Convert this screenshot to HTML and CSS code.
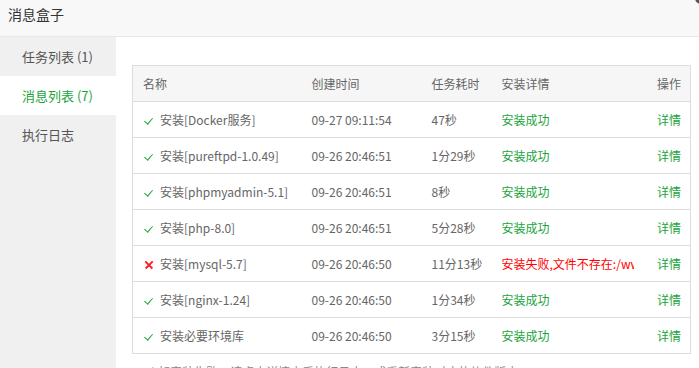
FILE: index.html
```html
<!DOCTYPE html>
<html lang="zh-CN">
<head>
    <meta charset="UTF-8">
    <title>消息盒子</title>
    <link rel="stylesheet" href="styles.css">
</head>
<body>
    <div class="layer">
        <div class="layer-title">消息盒子</div>
        <span class="layer-close"></span>
        <div class="layer-body">
            <ul class="tabs">
                <li>任务列表 (1)</li>
                <li class="active">消息列表 (7)</li>
                <li>执行日志</li>
            </ul>
            <div class="content">
                <table class="task-table">
                    <colgroup>
                        <col class="c-name">
                        <col class="c-time">
                        <col class="c-cost">
                        <col class="c-info">
                        <col class="c-op">
                    </colgroup>
                    <thead>
                        <tr>
                            <th>名称</th>
                            <th>创建时间</th>
                            <th>任务耗时</th>
                            <th>安装详情</th>
                            <th class="op">操作</th>
                        </tr>
                    </thead>
                    <tbody>
                        <tr>
                            <td><span class="ok"></span>安装[Docker服务]</td>
                            <td>09-27 09:11:54</td>
                            <td>47秒</td>
                            <td><div class="clip green">安装成功</div></td>
                            <td class="op"><a>详情</a></td>
                        </tr>
                        <tr>
                            <td><span class="ok"></span>安装[pureftpd-1.0.49]</td>
                            <td>09-26 20:46:51</td>
                            <td>1分29秒</td>
                            <td><div class="clip green">安装成功</div></td>
                            <td class="op"><a>详情</a></td>
                        </tr>
                        <tr>
                            <td><span class="ok"></span>安装[phpmyadmin-5.1]</td>
                            <td>09-26 20:46:51</td>
                            <td>8秒</td>
                            <td><div class="clip green">安装成功</div></td>
                            <td class="op"><a>详情</a></td>
                        </tr>
                        <tr>
                            <td><span class="ok"></span>安装[php-8.0]</td>
                            <td>09-26 20:46:51</td>
                            <td>5分28秒</td>
                            <td><div class="clip green">安装成功</div></td>
                            <td class="op"><a>详情</a></td>
                        </tr>
                        <tr>
                            <td><span class="fail"></span>安装[mysql-5.7]</td>
                            <td>09-26 20:46:50</td>
                            <td>11分13秒</td>
                            <td><div class="clip red">安装失败,文件不存在:/www/server/panel/install/mysql.sh</div></td>
                            <td class="op"><a>详情</a></td>
                        </tr>
                        <tr>
                            <td><span class="ok"></span>安装[nginx-1.24]</td>
                            <td>09-26 20:46:50</td>
                            <td>1分34秒</td>
                            <td><div class="clip green">安装成功</div></td>
                            <td class="op"><a>详情</a></td>
                        </tr>
                        <tr>
                            <td><span class="ok"></span>安装必要环境库</td>
                            <td>09-26 20:46:50</td>
                            <td>3分15秒</td>
                            <td><div class="clip green">安装成功</div></td>
                            <td class="op"><a>详情</a></td>
                        </tr>
                    </tbody>
                </table>
                <p class="tips">* 如安装失败，请点击详情查看执行日志，或重新安装对应的软件版本</p>
            </div>
        </div>
    </div>
</body>
</html>
```

FILE: styles.css
```css
/* 消息盒子弹层 */
body {
    margin: 0;
    padding: 0;
    background-color: #ffffff;
    color: #666;
    font-family: "Noto Sans CJK SC", "Liberation Sans", sans-serif;
    overflow: hidden;
}
.layer {
    position: relative;
    width: 699px;
    height: 368px;
    overflow: hidden;
}
.layer-title {
    height: 36px;
    line-height: 28px;
    padding: 0 8px;
    font-size: 14px;
    color: #333;
    background-color: #f8f8f8;
    border-bottom: 1px solid #e8e8e8;
}
.layer-close {
    position: absolute;
    top: -8px;
    right: -8px;
    width: 12px;
    height: 12px;
    border-radius: 50%;
    background-color: #555;
}
.layer-body {
    display: flex;
    height: 331px;
}
.tabs {
    width: 116px;
    margin: 0;
    padding: 0;
    list-style: none;
    background-color: #f0f0f0;
    flex-shrink: 0;
}
.tabs li {
    height: 39px;
    line-height: 39px;
    padding-left: 22px;
    font-size: 13px;
    color: #555;
}
.tabs li.active {
    background-color: #ffffff;
    color: #20a53a;
}
.content {
    flex: 1;
    padding: 28px 0 0 16px;
}
.task-table {
    width: 558px;
    table-layout: fixed;
    border-collapse: collapse;
    border: 1px solid #ddd;
    font-size: 12px;
}
.c-name { width: 169px; }
.c-time { width: 120px; }
.c-cost { width: 70px; }
.c-info { width: 152px; }
.c-op { width: 47px; }
.task-table th,
.task-table td {
    height: 35px;
    padding: 0 10px;
    text-align: left;
    font-weight: normal;
    color: #666;
    border-bottom: 1px solid #ddd;
    white-space: nowrap;
    overflow: hidden;
}
.task-table th {
    background-color: #f6f6f6;
}
.task-table .op {
    text-align: right;
    padding-right: 9px;
}
.task-table a {
    color: #20a53a;
}
.clip {
    overflow: hidden;
    white-space: nowrap;
}
.green { color: #20a53a; }
.red { color: #ff0000; }
.ok,
.fail {
    display: inline-block;
    width: 10px;
    height: 10px;
    margin: 0 6px 0 1px;
    vertical-align: -1px;
    position: relative;
}
.ok::after {
    content: "";
    position: absolute;
    left: 2px;
    top: 0;
    width: 4px;
    height: 7px;
    border-right: 1.5px solid #20a53a;
    border-bottom: 1.5px solid #20a53a;
    transform: rotate(40deg);
}
.fail::before,
.fail::after {
    content: "";
    position: absolute;
    left: 0;
    top: 4px;
    width: 10px;
    height: 1.5px;
    background-color: #ff2020;
    transform: rotate(45deg);
}
.fail::after {
    transform: rotate(-45deg);
}
.tips {
    margin: 9px 0 0 18px;
    font-size: 12px;
    color: #888;
    white-space: nowrap;
}
```
